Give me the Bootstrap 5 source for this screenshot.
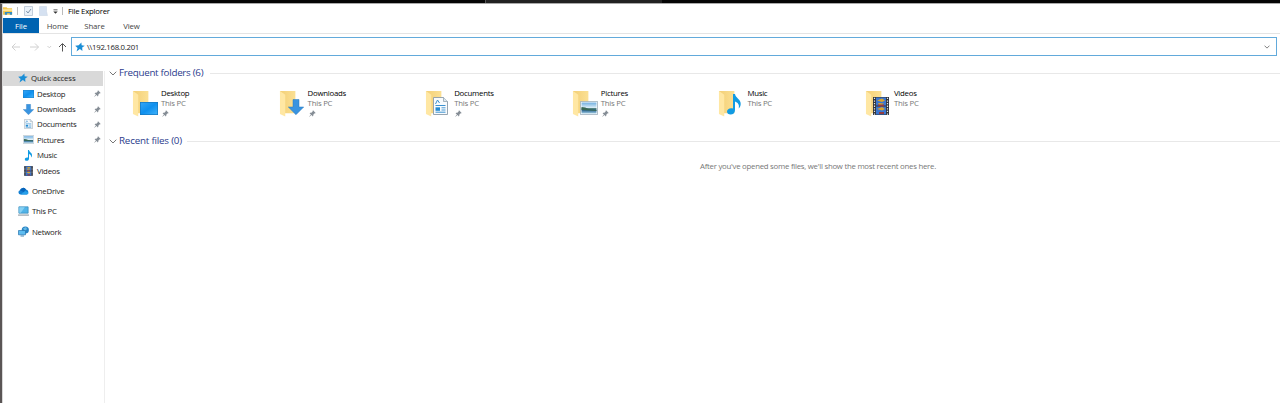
<!DOCTYPE html>
<html lang="en">
<head>
<meta charset="utf-8">
<title>File Explorer</title>
<link href="https://cdn.jsdelivr.net/npm/bootstrap@5.3.0/dist/css/bootstrap.min.css" rel="stylesheet">
<style>
body{width:1280px;height:403px;overflow:hidden;background:#fff;color:#222;font:7.8px/10px "Open Sans","Noto Sans",sans-serif;letter-spacing:-.25px}
svg{display:block;flex:none}
.desktop-strip{height:3px;background:#050505}
.desktop-strip .behind-window{margin-left:485px;width:177px;background:#222;border-left:1px solid #555}
.window-frame{height:400px;border-left:2px solid #5a5555;border-top:1px solid #aaa;box-shadow:inset 1px 0 #d8d8d8}
.title-row{height:14px;padding-left:1px}
.title-row .sep{width:1px;height:8px;background:#bbb}
.ribbon{height:16px;border-bottom:1px solid #e4e4e4;padding-left:1px}
.ribbon .tab{width:37px;text-align:center;color:#444;line-height:16px;letter-spacing:-.1px}
.ribbon .file{width:36px;background:#0063b1;color:#fff}
.address-row{height:26px;padding:3px 3px 0 9px}
.address{height:19px;width:1206px;border:1px solid #62aadb;padding:0 6px 0 3px;color:#222}
.content-area{height:344px;padding-top:11px}
.side{width:103px;border-right:1px solid #eee;padding-left:1px;margin-top:-.4px}
.side-row{height:15.4px;padding-left:20px;padding-right:3px}
.side-row.root{padding-left:15px}
.side-row.selected{background:#d9d9d9;width:100px}
.heading{height:12px;font-size:9.8px;line-height:12px;color:#2a3b8c;letter-spacing:-.28px}
.heading .rule{height:1px;background:#e8e8e8}
.tiles{display:grid;grid-template-columns:repeat(6,146.6px);padding-left:27px;height:56px;padding-top:11px}
.tile-text{margin-left:3px;margin-top:-2px}
.muted{color:#777}
</style>
</head>
<body>
<svg width="0" height="0" class="position-absolute">
<defs>
<linearGradient id="gf" x1="0" x2="1"><stop stop-color="#f3cf76"/><stop offset="1" stop-color="#fbe094"/></linearGradient>
<linearGradient id="gb" x1="0" y1="0" x2="1" y2="1"><stop stop-color="#35a5f5"/><stop offset=".5" stop-color="#0f90ee"/><stop offset="1" stop-color="#3eb1fa"/></linearGradient>
<linearGradient id="gp" x1="0" y1="0" x2="0" y2="1"><stop stop-color="#6faee0"/><stop offset=".5" stop-color="#e0f0f8"/><stop offset=".55" stop-color="#487b78"/><stop offset=".7" stop-color="#2d6794"/><stop offset="1" stop-color="#a2cde5"/></linearGradient>
<symbol id="folder" viewBox="0 0 27 28"><path d="M1 1h16v23H5z" fill="url(#gf)"/><path d="M1 1l5.500 4v22.500L1 25z" fill="#ffe7a3"/></symbol>
<symbol id="desk" viewBox="0 0 18 13"><path d="M0 0h18v13H0z" fill="#1577bf"/><path d="M.7.7h16.600v11.600H.7z" fill="url(#gb)"/></symbol>
<symbol id="down" viewBox="0 0 16 16"><path d="M5 .5h6V8h4.700L8 15.700.3 8H5z" fill="#3994e0" stroke="#2879bc" stroke-width=".5"/></symbol>
<symbol id="doc" viewBox="0 0 15 18"><path d="M.5.5h10l4 4v13H.5z" fill="#f8fbfd" stroke="#8b9ba8" stroke-width=".9"/><path d="M10.500.5v4h4" fill="#dce8ef" stroke="#8b9ba8" stroke-width=".7"/><path d="M2.500 7l2-4 2 3M2.500 8.500h10M2.500 15.200h10" fill="none" stroke="#3a91d0"/><path d="M2.500 10.300h4.500v3.500H2.500z" fill="#258bd2"/><path d="M8.500 10.800h4M8.500 13h4" stroke="#4b9ad4"/></symbol>
<symbol id="pic" viewBox="0 0 18 14"><path d="M.4.4h17.200v13.200H.4z" fill="#fff" stroke="#93a6b4" stroke-width=".8"/><path d="M1.500 1.500h15v11h-15z" fill="url(#gp)"/><path d="M1.500 6q4 0 7 2l8 1v1l-15-1z" fill="#396955"/></symbol>
<symbol id="music" viewBox="0 0 14 21"><path d="M6 0h2c.3 4 6 5 5.700 10-.1 2-1 3.500-2 4.500 1-4-1-6-3.700-7V16c0 3-2 4.600-4.500 4.600C1.500 20.600 0 19.300 0 17.500c0-2.500 3-4 6-3.100z" fill="#119be3"/></symbol>
<symbol id="video" viewBox="0 0 16 18"><path d="M0 0h16v18H0z" fill="#30343b"/><path d="M3 .5h10v8H3zM3 9.500h10v8H3z" fill="#3b76cf"/><path d="M4 3.500l5-2 3 2-3 1.500zM5 6l6 .5-2 1.500H6zM4 12l5-2 3 2-3 1.500z" fill="#d8a530"/><path d="M5 7.500h6v2H5zM6 15h5v2H6z" fill="#923c42"/><path d="M1.500.8v17M14.500.8v17" stroke="#e8e8e8" stroke-width="1.200" stroke-dasharray="1.300 1.300"/></symbol>
<symbol id="pin" viewBox="0 0 8 8"><path d="M4.600.4l3 3-.8.5-.4-.1-1.500 1.500c.2.800 0 1.500-.5 2L2.900 5.800.5 7.700l-.2-.2 1.900-2.400L.7 3.600c.6-.5 1.300-.6 2-.4l1.500-1.500-.1-.5z" fill="#858d95"/></symbol>
<symbol id="star" viewBox="0 0 10 10"><path d="M6.400.6l.2 2.600 3.200.6-2.600 1.800.2 3.300-2.500-1.800L1.500 9.400l1.100-3.500L.2 3.700l3.500-.4z" fill="#1b8ed6"/></symbol>
<symbol id="chev" viewBox="0 0 8 5"><path d="M.7.7L4 4 7.300.7" fill="none" stroke="currentColor" stroke-width="1"/></symbol>
<symbol id="cloud" viewBox="0 0 11 8"><path d="M2.500 7.500A2.200 2.200 0 0 1 2 3.200 3.300 3.300 0 0 1 8 2.500a2.600 2.600 0 0 1 .7 5z" fill="#1480d3"/><path d="M2.500 7.500L7.300 4l3.300 1.700c-.2 1.200-1 1.800-2 1.800z" fill="#28a0ea"/><path d="M2 3.200A3.300 3.300 0 0 1 8 2.500L5.500 5z" fill="#0764ba"/></symbol>
<symbol id="pc" viewBox="0 0 12 11"><path d="M.9.9h10.200v7H.9z" fill="#52b4e8" stroke="#3588b9" stroke-width=".8"/><path d="M1.300 1.300h6.200L3 7.500H1.300z" fill="#86d0f3"/><path d="M0 10h12" stroke="#73838f" stroke-width="1"/></symbol>
<symbol id="net" viewBox="0 0 11 11"><circle cx="7.300" cy="4" r="3.600" fill="#2783c4"/><path d="M5 2.500l3-1.500 1 2-2 2z" fill="#65b9e5"/><path d="M.5 4.500h7v4.300h-7z" fill="#5ebcf0" stroke="#2574ad" stroke-width=".7"/><path d="M2.500 10h3.500" stroke="#4d8bb5"/></symbol>
</defs></svg>

<div class="desktop-strip d-flex"><div class="behind-window"></div></div>
<div class="window-frame">
  <header>
    <div class="title-row d-flex align-items-center">
      <svg width="10" height="10" viewBox="0 0 11 10"><path d="M0 1h4l1 1h5v7H0z" fill="#f5c84f"/><path d="M0 3h10v2H0z" fill="#ffe59a"/><path d="M2 9V6h8v3H7.500V7.500h-3V9z" fill="#338dc5"/></svg>
      <span class="sep" style="margin-left:4px"></span>
      <svg width="9" height="10" viewBox="0 0 9 10" style="margin-left:6px"><path d="M.5.5h8v9h-8z" fill="#eaf1f8" stroke="#b5c2d0" stroke-width=".8"/><path d="M2.300 5l1.700 2 3-4" fill="none" stroke="#8094ab"/></svg>
      <svg width="9" height="10" viewBox="0 0 9 10" style="margin-left:6px"><path d="M.5.5h7v5l1 4h-8z" fill="#d5e1f1" stroke="#c5d2e2" stroke-width=".5"/></svg>
      <svg width="5" height="5" viewBox="0 0 5 5" style="margin-left:5px"><path d="M.5.500h4v.8h-4zM.3 2.500h4.400L2.500 4.700z" fill="#333"/></svg>
      <span class="sep" style="margin-left:4px"></span>
      <span class="text-black" style="margin-left:5px;letter-spacing:-.25px">File Explorer</span>
    </div>
    <nav class="ribbon d-flex"><span class="tab file">File</span><span class="tab">Home</span><span class="tab">Share</span><span class="tab">View</span></nav>
    <div class="address-row d-flex">
      <div class="d-flex align-items-center" style="width:60px;height:19px">
        <svg width="56" height="10" viewBox="0 0 56 10" fill="none"><path d="M4.500 1.500L1 5l3.500 3.500M1 5h8M24 1.500L27.500 5 24 8.500M19 5h8.500" stroke="#d0d0d0"/><path d="M36.500 4L38.300 5.800 40.100 4" stroke="#d0d0d0"/><path d="M48 5l3.500-3.500L55 5M51.500 2v7.500" stroke="#555"/></svg>
      </div>
      <div class="address d-flex align-items-center"><svg width="10" height="10"><use href="#star"/></svg><span style="margin-left:2px;letter-spacing:-.3px">\\192.168.0.201</span><svg class="ms-auto" width="6" height="4" style="color:#555"><use href="#chev"/></svg></div>
    </div>
  </header>
  <div class="content-area d-flex">
    <aside class="side">
      <div class="side-row root selected d-flex align-items-center"><svg width="10" height="10"><use href="#star"/></svg><span style="margin-left:3px;letter-spacing:-.15px">Quick access</span></div>
      <div class="side-row d-flex align-items-center"><svg width="11" height="8"><use href="#desk"/></svg><span style="margin-left:3px">Desktop</span><svg class="ms-auto" width="7" height="7"><use href="#pin"/></svg></div>
      <div class="side-row d-flex align-items-center"><svg width="11" height="11"><use href="#down"/></svg><span style="margin-left:3px">Downloads</span><svg class="ms-auto" width="7" height="7"><use href="#pin"/></svg></div>
      <div class="side-row d-flex align-items-center"><svg width="11" height="10"><use href="#doc"/></svg><span style="margin-left:3px">Documents</span><svg class="ms-auto" width="7" height="7"><use href="#pin"/></svg></div>
      <div class="side-row d-flex align-items-center"><svg width="11" height="9"><use href="#pic"/></svg><span style="margin-left:3px">Pictures</span><svg class="ms-auto" width="7" height="7"><use href="#pin"/></svg></div>
      <div class="side-row d-flex align-items-center"><svg width="11" height="11"><use href="#music"/></svg><span style="margin-left:3px">Music</span></div>
      <div class="side-row d-flex align-items-center"><svg width="11" height="10"><use href="#video"/></svg><span style="margin-left:3px">Videos</span></div>
      <div class="side-row root d-flex align-items-center" style="margin-top:5px"><svg width="11" height="8"><use href="#cloud"/></svg><span style="margin-left:3px">OneDrive</span></div>
      <div class="side-row root d-flex align-items-center" style="margin-top:5px"><svg width="11" height="10"><use href="#pc"/></svg><span style="margin-left:3px">This PC</span></div>
      <div class="side-row root d-flex align-items-center" style="margin-top:5px"><svg width="11" height="11"><use href="#net"/></svg><span style="margin-left:3px">Network</span></div>
    </aside>
    <main class="flex-grow-1" style="margin-top:-4px">
      <div class="heading d-flex align-items-center" style="margin-left:4px"><svg width="8" height="5" style="color:#777"><use href="#chev"/></svg><span style="margin:0 7px 0 2px">Frequent folders (6)</span><span class="rule flex-grow-1"></span></div>
      <div class="tiles">
        <div class="d-flex"><svg width="26" height="27" viewBox="0 0 26 27"><use href="#folder" width="26" height="27"/><use href="#desk" x="8" y="12" width="18" height="13"/></svg><div class="tile-text"><div class="text-black">Desktop</div><div class="muted">This PC</div><svg width="7" height="7" style="margin:2px 0 0 1px"><use href="#pin"/></svg></div></div>
        <div class="d-flex"><svg width="26" height="27" viewBox="0 0 26 27"><use href="#folder" width="26" height="27"/><use href="#down" x="9" y="9" width="16" height="16"/></svg><div class="tile-text"><div class="text-black">Downloads</div><div class="muted">This PC</div><svg width="7" height="7" style="margin:2px 0 0 1px"><use href="#pin"/></svg></div></div>
        <div class="d-flex"><svg width="26" height="27" viewBox="0 0 26 27"><use href="#folder" width="26" height="27"/><use href="#doc" x="8" y="7" width="15" height="18"/></svg><div class="tile-text"><div class="text-black">Documents</div><div class="muted">This PC</div><svg width="7" height="7" style="margin:2px 0 0 1px"><use href="#pin"/></svg></div></div>
        <div class="d-flex"><svg width="26" height="27" viewBox="0 0 26 27"><use href="#folder" width="26" height="27"/><use href="#pic" x="8" y="11" width="18" height="14"/></svg><div class="tile-text"><div class="text-black">Pictures</div><div class="muted">This PC</div><svg width="7" height="7" style="margin:2px 0 0 1px"><use href="#pin"/></svg></div></div>
        <div class="d-flex"><svg width="26" height="27" viewBox="0 0 26 27"><use href="#folder" width="26" height="27"/><use href="#music" x="9" y="4" width="14" height="21"/></svg><div class="tile-text"><div class="text-black">Music</div><div class="muted">This PC</div></div></div>
        <div class="d-flex"><svg width="26" height="27" viewBox="0 0 26 27"><use href="#folder" width="26" height="27"/><use href="#video" x="8" y="7" width="16" height="18"/></svg><div class="tile-text"><div class="text-black">Videos</div><div class="muted">This PC</div></div></div>
      </div>
      <div class="heading d-flex align-items-center" style="margin-left:4px"><svg width="8" height="5" style="color:#777"><use href="#chev"/></svg><span style="margin:0 5px 0 2px;letter-spacing:-.2px">Recent files (0)</span><span class="rule flex-grow-1"></span></div>
      <div class="muted" style="margin:14px 0 0 595px">After you've opened some files, we'll show the most recent ones here.</div>
    </main>
  </div>
</div>
<script src="https://cdn.jsdelivr.net/npm/bootstrap@5.3.0/dist/js/bootstrap.bundle.min.js"></script>
</body>
</html>
